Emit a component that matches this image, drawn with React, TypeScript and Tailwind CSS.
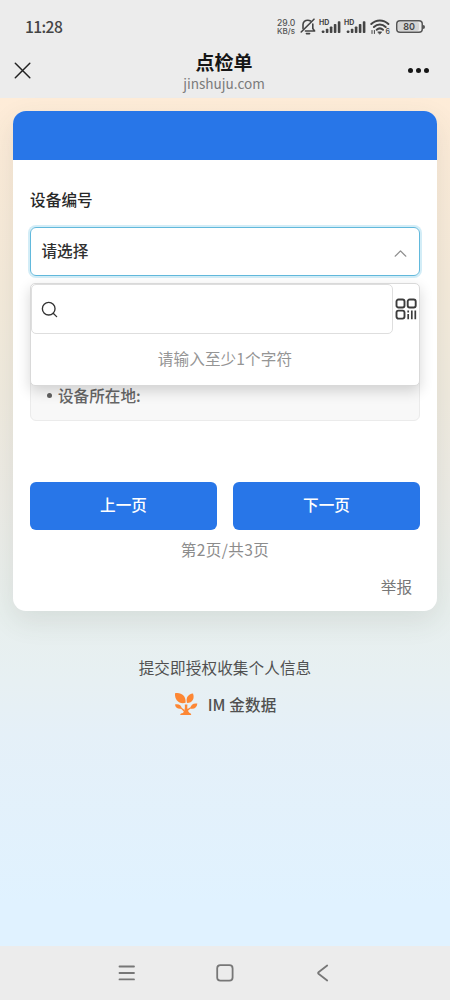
import { ChevronUp, Search } from 'lucide-react';

function SignalIcon() {
  return (
    <div className="relative h-[14px] w-[22px]">
      <span className="absolute left-0 -top-px font-['Inter'] text-[7px] leading-[8px] font-bold text-[#444]">HD</span>
      <svg width="22" height="14" viewBox="0 0 22 14" fill="#444" className="absolute inset-0">
        <rect x="2.8" y="10.4" width="2.6" height="2.6" rx="0.8" />
        <rect x="6.8" y="8.8" width="2.6" height="4.2" rx="0.8" />
        <rect x="10.8" y="6.4" width="2.6" height="6.6" rx="0.8" />
        <rect x="14.8" y="4" width="2.6" height="9" rx="0.8" />
        <rect x="18.8" y="1.2" width="2.6" height="11.8" rx="0.8" />
      </svg>
    </div>
  );
}

function MutedBell() {
  return (
    <svg width="16" height="17" viewBox="0 0 16 17" fill="none" stroke="#444" strokeWidth="1.6" strokeLinecap="round" strokeLinejoin="round">
      <path d="M3 10.6V6.6C3 3.8 5 2.2 7.8 2.2c1.1 0 2 .3 2.8.8M12.8 6v4.6l1.8 2.4H5.4" />
      <path d="M14 1.2 1.2 14" />
      <path d="M6.4 15.6h3.2" />
    </svg>
  );
}

function WifiIcon() {
  return (
    <div className="relative h-[16px] w-[20px]">
      <svg width="20" height="16" viewBox="0 0 20 16" fill="none" stroke="#444" strokeWidth="2" strokeLinecap="round">
        <path d="M1.3 5C6.3.2 13.4.2 18.4 5" />
        <path d="M3.9 8c3.5-3.3 8.3-3.3 11.8 0" />
        <path d="M6.7 10.8c1.9-1.7 4.4-1.7 6.3 0" />
        <path d="M8.2 12.9h3.4L9.9 15Z" fill="#444" strokeWidth="0.8" />
        <path d="M2 14.5v-3M4.4 11.5v3" strokeWidth="1" />
      </svg>
      <span className="absolute left-[15.5px] top-[9px] font-['Inter'] text-[7px] leading-[7px] font-medium text-[#444]">6</span>
    </div>
  );
}

function StatusBar() {
  return (
    <div className="flex h-[52px] items-center justify-between pl-[25px] pr-[25px] text-[#444]">
      <span className="font-['Noto_Sans_CJK_SC',sans-serif] text-[15.6px] leading-5 font-medium tracking-[-0.6px]">11:28</span>
      <div className="mt-px flex items-center">
        <div className="mr-[4px] w-[19px] font-['Inter',sans-serif] text-[8.6px] leading-[8px] font-medium text-[#555] whitespace-nowrap">
          <p>29.0</p>
          <p className="text-[8px]">KB/s</p>
        </div>
        <MutedBell />
        <div className="ml-[3px]"><SignalIcon /></div>
        <div className="ml-[3px]"><SignalIcon /></div>
        <div className="ml-[4px]"><WifiIcon /></div>
        <div className="ml-[6px] flex items-center">
          <div className="flex h-[13px] w-[27px] justify-start rounded-[4px] bg-[#ececec] p-[1px] shadow-[inset_0_0_0_1.5px_#555]">
            <div className="m-px flex w-[21px] items-center justify-center rounded-[2px] bg-[#d4d4d4] pl-px font-['Inter'] text-[9px] leading-none font-semibold">80</div>
          </div>
          <div className="h-[4px] w-[2px] rounded-r-sm bg-[#555]" />
        </div>
      </div>
    </div>
  );
}

function QrIcon() {
  return (
    <svg width="22" height="22" viewBox="0 0 22 22" fill="none" stroke="#3c3c3c" strokeWidth="1.9">
      <rect x="1.5" y="1.5" width="8" height="8" rx="2" />
      <rect x="12.7" y="1.5" width="8" height="8" rx="2" />
      <rect x="1.5" y="12.6" width="8" height="8" rx="2" />
      <path d="M13.2 12.4v2M13.2 16v5.2M16.8 12.4v8.8M20.3 12.4v8.8" strokeWidth="1.7" />
    </svg>
  );
}

function TreeLogo() {
  return (
    <svg width="24" height="24" viewBox="0 0 24 24" fill="#fd8734">
      <path d="M1 1.3C7 .1 12 3.5 11.6 10.8 5.3 12.4.6 8.6 1 1.3Z" />
      <path d="M19 1.5c1.8 5.1-.4 9.4-6 9.4-1.4-5 1-8.9 6-9.4Z" />
      <path d="M1 12.5c3.6-.9 6.3.6 6.8 4.1C4.4 17.5 1.5 16 1 12.5Z" />
      <path d="M23.3 11.6c-.2 4-3 6-7.2 5 .6-3.8 3.4-5.7 7.2-5Z" />
      <path d="M10.8 12.4h2.6c-.5 3.4.2 6.4 1.9 8.4.9.3 1.9.8 1.9 2.2H6.2c0-1.5 1.2-2 2.8-2.1 1.7-2 2.2-5.1 1.8-8.5Z" />
      <path d="M7.2 15.6 10.6 18l-.6 1.8-3.4-3.5ZM12.8 17.6l3.6-2.4.5.9-3.6 3.3Z" />
    </svg>
  );
}

export default function App() {
  return (
    <div className="flex h-[1000px] w-[450px] flex-col overflow-hidden bg-[#ececec] font-['Noto_Sans_CJK_SC',sans-serif] text-[15.6px]">
      <header className="h-[98px] shrink-0">
        <StatusBar />
        <div className="flex h-[44px] justify-between px-[14px]">
          <svg width="18" height="18" viewBox="0 0 18 18" stroke="#222" strokeWidth="1.5" strokeLinecap="round" className="mt-[10px]">
            <path d="M1.3 1.3 15.8 15.8M15.8 1.3 1.3 15.8" />
          </svg>
          <div className="ml-[8px] text-center">
            <h1 className="-mt-[2px] text-[19px] leading-6 font-bold text-[#161616]">点检单</h1>
            <p className="-mt-px text-[13.6px] leading-5 text-[#7b7b7b]">jinshuju.com</p>
          </div>
          <div className="mr-[7px] mt-[16px] flex gap-[3px]">
            <span className="size-[5px] rounded-full bg-[#161616]" />
            <span className="size-[5px] rounded-full bg-[#161616]" />
            <span className="size-[5px] rounded-full bg-[#161616]" />
          </div>
        </div>
      </header>

      <main className="h-[848px] shrink-0 bg-[linear-gradient(180deg,#feecd8_0%,#f5ebdb_22%,#f0ebdf_35%,#edece6_47%,#e8efed_60%,#e7f0f3_69%,#e5f0f8_75%,#e0f2ff_95%)] px-[13px] pt-[13px]">
        <section className="h-[499.5px] rounded-[13px] bg-white shadow-[0_10px_28px_rgba(60,70,60,0.11)]">
          <div className="h-[49px] rounded-t-[13px] bg-[#2876e8]" />
          <div className="px-[17px] pt-[27px]">
            <label className="block leading-6 font-medium tracking-[0.1px] text-[#282828]">设备编号</label>

            <div className="relative mt-[16px]">
              <div className="flex h-[49px] items-center justify-between rounded-[6px] border border-[#62b9dc] pb-px pl-[10.5px] pr-[8px] shadow-[0_0_0_2px_#d3edf7]">
                <span className="font-medium text-[#303030]">请选择</span>
                <ChevronUp size={21} strokeWidth={1.6} className="mt-[5px] text-[#909090]" />
              </div>

              <div className="absolute inset-x-0 top-[56px] z-10 h-[103px] rounded-[5px] border border-[#d9d9d9] bg-white shadow-[0_5px_14px_rgba(0,0,0,0.16)]">
                <div className="flex h-[50px] items-center">
                  <div className="flex h-[50px] w-[362px] items-center rounded-[5px] border border-[#dedede] pl-[8px]">
                    <Search size={19} strokeWidth={1.7} className="text-[#333]" />
                  </div>
                  <div className="ml-[2px]"><QrIcon /></div>
                </div>
                <p className="mt-[12px] text-center leading-6 tracking-[0.1px] text-[#959595]">请输入至少1个字符</p>
              </div>

              <div className="mt-[85px] flex h-[60px] items-end rounded-[6px] border border-[#ebebeb] bg-[#f8f8f8] pb-[13px] pl-[16px]">
                <div className="flex items-center gap-[6px] leading-6 font-medium text-[#666]">
                  <span className="size-[5px] rounded-full bg-[#606060]" />
                  设备所在地:
                </div>
              </div>
            </div>

            <div className="mt-[61px] grid grid-cols-2 gap-[16px]">
              <button className="h-[47.5px] rounded-[6px] bg-[#2876e8] pb-[2px] font-medium text-white">上一页</button>
              <button className="h-[47.5px] rounded-[6px] bg-[#2876e8] pb-[2px] font-medium text-white">下一页</button>
            </div>
            <p className="mt-[7.5px] text-center leading-6 tracking-[0.4px] text-[#8c8c8c]">第2页/共3页</p>
            <p className="mt-[12.5px] pr-[8px] text-right leading-6 text-[#777]">举报</p>
          </div>
        </section>

        <footer className="mt-[44px] text-[#505050]">
          <p className="text-center leading-6 tracking-[0.1px]">提交即授权收集个人信息</p>
          <div className="mt-[13px] flex items-center justify-center gap-[10px] leading-6">
            <TreeLogo />
            <span className="font-medium tracking-[0.1px]">IM 金数据</span>
          </div>
        </footer>
      </main>

      <nav className="flex flex-1 items-center justify-between pl-[118px] pr-[121px]">
        <svg width="18" height="18" viewBox="0 0 18 18" stroke="#777" strokeWidth="1.8" strokeLinecap="round">
          <path d="M1.5 2.5h14.5M1.5 9h14.5M1.5 15.4h14.5" />
        </svg>
        <svg width="18" height="18" viewBox="0 0 18 18" fill="none" stroke="#777" strokeWidth="1.8" className="-ml-[3px]">
          <rect x="1.2" y="1.2" width="15.4" height="15.4" rx="3.2" />
        </svg>
        <svg width="12" height="18" viewBox="0 0 12 18" fill="none" stroke="#777" strokeWidth="1.8" strokeLinecap="round" strokeLinejoin="round">
          <path d="M10.2 1.5 1.5 8.3q-.8.7 0 1.4l8.7 6.8" />
        </svg>
      </nav>
    </div>
  );
}
